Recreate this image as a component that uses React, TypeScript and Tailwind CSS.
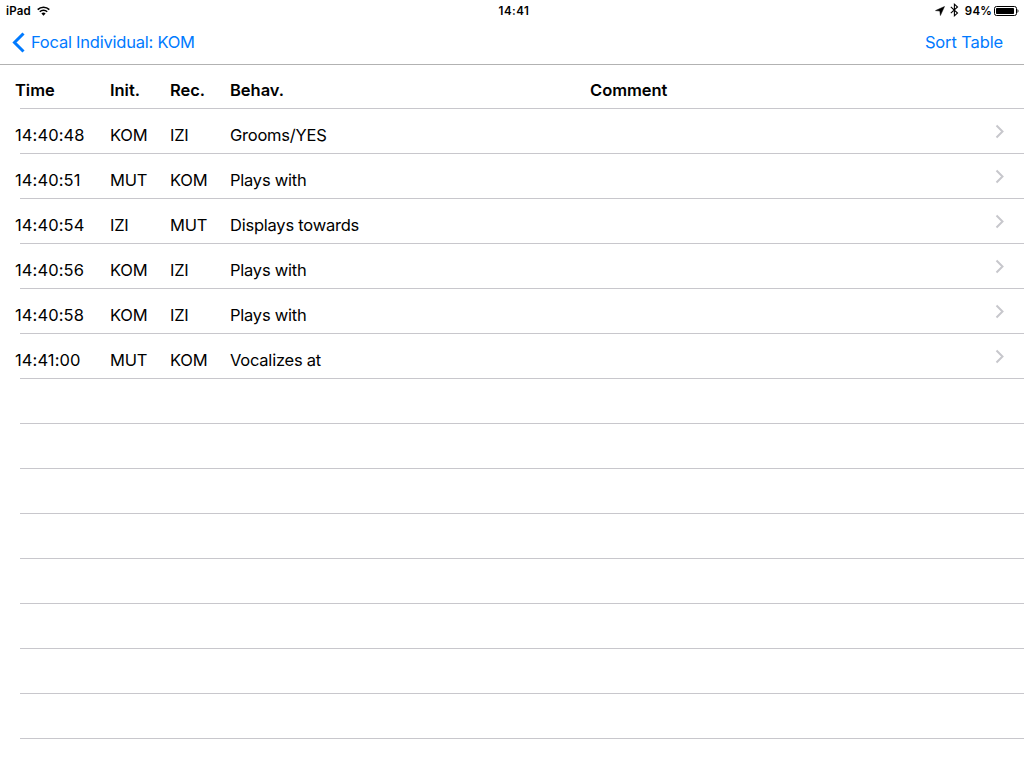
const rows = [
  ['14:40:48', 'KOM', 'IZI', 'Grooms/YES'],
  ['14:40:51', 'MUT', 'KOM', 'Plays with'],
  ['14:40:54', 'IZI', 'MUT', 'Displays towards'],
  ['14:40:56', 'KOM', 'IZI', 'Plays with'],
  ['14:40:58', 'KOM', 'IZI', 'Plays with'],
  ['14:41:00', 'MUT', 'KOM', 'Vocalizes at'],
];

function StatusBar() {
  return (
    <div className="grid h-5 grid-cols-[1fr_auto_1fr] items-center pl-1.5 pr-[5px] pt-[3px] text-[11.5px] leading-none font-semibold">
      <div className="flex items-center gap-1.5">
        <span className="tracking-[0.2px]">iPad</span>
        <svg className="mb-0.5" width="13" height="10" viewBox="0 0 13 10" fill="none" stroke="black" strokeWidth="1.6">
          <path d="M.7 3.6a8.2 8.2 0 0 1 11.6 0M2.8 5.8a5.2 5.2 0 0 1 7.4 0" />
          <path d="M4.4 7.6a3 3 0 0 1 4.2 0L6.5 9.8z" fill="black" stroke="none" />
        </svg>
      </div>
      <span className="pl-[3px] tracking-[0.5px]">14:41</span>
      <div className="flex items-center justify-end">
        <svg className="mr-[5px] mb-0.5" width="10" height="10" viewBox="0 0 10 10"><path d="M9.5.5 5.4 9.5 4.8 5 .5 4.6z" stroke="black" strokeWidth=".5" /></svg>
        <svg className="mr-1.5 mb-[3px]" width="9" height="14" viewBox="0 0 9 14" fill="none" stroke="black" strokeWidth="1.1"><path d="M.8 3.8 7.5 10 4.4 12.8V1.2L7.5 4 .8 10.2" /></svg>
        <span className="mr-[2px] tracking-[0.2px]">94%</span>
        <svg className="mb-0.5" width="25" height="10" viewBox="0 0 25 10"><rect x=".5" y=".5" width="22" height="9" rx="2" fill="none" stroke="black" /><rect x="2" y="2" width="18" height="6" rx=".7" /><path d="M23.5 3q2 2 0 4z" /></svg>
      </div>
    </div>
  );
}

export default function App() {
  return (
    <div className="h-[768px] w-[1024px] overflow-hidden bg-white font-['Inter',sans-serif] text-[16.5px] leading-6 tracking-[-0.23px] text-black">
      <StatusBar />
      <header className="flex h-[45px] items-center justify-between border-b border-[#b2b2b2] pl-3 pr-[21px] text-[#007aff]">
        <button className="flex items-center gap-1.5">
          <svg width="13" height="21" viewBox="0 0 13 21" fill="none" stroke="currentColor" strokeWidth="3"><path d="M11.5 1.5 2.5 10.5l9 9" /></svg>
          <span>Focal Individual: KOM</span>
        </button>
        <button className="tracking-[-0.13px]">Sort Table</button>
      </header>
      <main>
        <div className="flex h-11 flex-col">
          <div className="grid h-[43px] grid-cols-[95px_60px_60px_360px_1fr] items-center pl-[15px] pt-1.5 font-semibold tracking-[-0.03px]">
            <span>Time</span><span>Init.</span><span>Rec.</span><span>Behav.</span><span>Comment</span>
          </div>
          <div className="ml-5 h-px bg-[#c8c7cc]" />
        </div>
        {rows.map((row) => (
          <div key={row[0]} className="flex h-[45px] flex-col">
            <div className="flex h-11 justify-between pr-5">
              <div className="grid grid-cols-[95px_60px_60px_360px] pl-[15px] pt-[14px]">
                {row.map((cell, i) => <span key={i} className={i === 0 ? 'tracking-[0.1px]' : ''}>{cell}</span>)}
              </div>
              <svg className="mt-[15px]" width="9" height="15" viewBox="0 0 9 15" fill="none" stroke="#c7c7cc" strokeWidth="2"><path d="m1.5 1.5 6 6-6 6" /></svg>
            </div>
            <div className="ml-5 h-px shrink-0 bg-[#c8c7cc]" />
          </div>
        ))}
        {Array.from({ length: 8 }, (_, i) => (
          <div key={i} className="flex h-[45px] items-end pl-5"><div className="h-px flex-1 bg-[#c8c7cc]" /></div>
        ))}
      </main>
    </div>
  );
}
